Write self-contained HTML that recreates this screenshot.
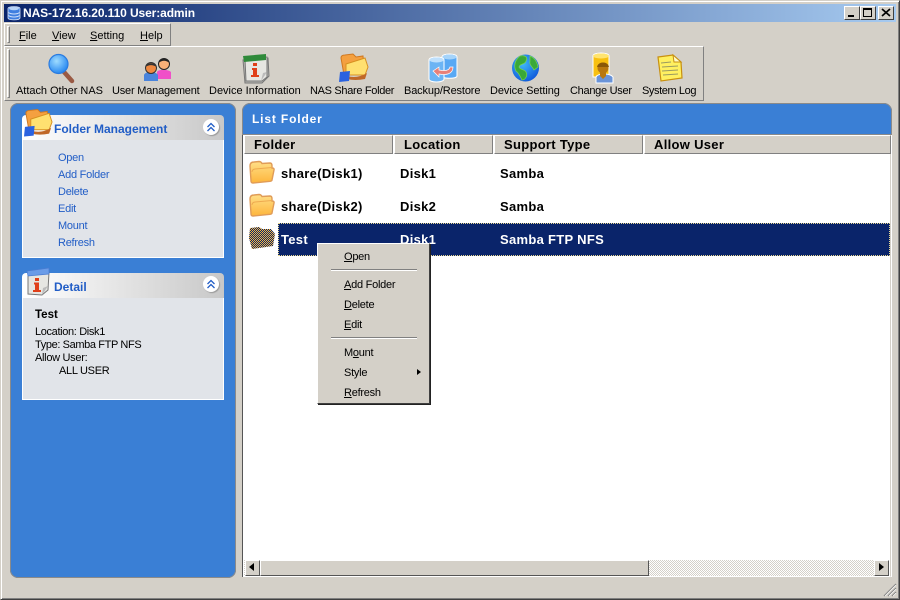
<!DOCTYPE html>
<html><head><meta charset="utf-8"><style>
html,body{margin:0;padding:0;width:900px;height:600px;overflow:hidden;background:#d4d0c8}
body{position:relative;font-family:"Liberation Sans",sans-serif;font-size:11px;color:#000}
.a{position:absolute}
.t{position:absolute;white-space:nowrap;line-height:14px}
u{text-decoration:underline}
.b{font-weight:bold;font-size:13px;letter-spacing:.3px}
.h{position:absolute;top:135px;height:17px;background:#d4d0c8;border-top:1px solid #fff;border-left:1px solid #fff;border-right:1px solid #808080;border-bottom:1px solid #808080}
.l{color:#215dc6}
.c{position:absolute;width:16px;height:16px;border-radius:50%;background:#fff;box-shadow:1px 1px 1px #999}
.s{letter-spacing:-.25px}
svg{position:absolute;overflow:visible}
</style></head><body>
<div class="a" style="left:0;top:0;width:898px;height:598px;border-top:1px solid #d4d0c8;border-left:1px solid #d4d0c8;border-right:1px solid #404040;border-bottom:1px solid #404040;box-shadow:inset 1px 1px 0 #fff,inset -1px -1px 0 #808080"></div>
<div class="a" style="left:4px;top:4px;width:892px;height:18px;background:linear-gradient(90deg,#0a246a,#a6caf0)"></div>
<svg style="left:7px;top:5px" width="16" height="16" viewBox="0 0 16 16"><path d="M1 3.5C1 1 13 1 13 3.5V13C13 15.500 1 15.500 1 13Z" fill="#3f7fe0" stroke="#d8e4f8" stroke-width=".8"/><ellipse cx="7" cy="3.500" rx="5" ry="1.800" fill="#b8d4f8"/><path d="M1.500 7.500C4 9.500 10 9.500 12.500 7.500M1.500 10.500C4 12.500 10 12.500 12.500 10.500" fill="none" stroke="#cfe0fa"/></svg>
<div class="t" style="left:23px;top:6px;color:#fff;font-weight:bold;font-size:12px;letter-spacing:-.1px">NAS-172.16.20.110 User:admin</div>
<div class="a" style="left:844px;top:6px;width:14px;height:12px;background:#d4d0c8;border-top:1px solid #fff;border-left:1px solid #fff;border-right:1px solid #404040;border-bottom:1px solid #404040"><div class="a" style="left:3px;top:8px;width:6px;height:2px;background:#000"></div></div>
<div class="a" style="left:860px;top:6px;width:14px;height:12px;background:#d4d0c8;border-top:1px solid #fff;border-left:1px solid #fff;border-right:1px solid #404040;border-bottom:1px solid #404040"><div class="a" style="left:2px;top:1px;width:7px;height:6px;border:1px solid #000;border-top-width:2px"></div></div>
<div class="a" style="left:878px;top:6px;width:14px;height:12px;background:#d4d0c8;border-top:1px solid #fff;border-left:1px solid #fff;border-right:1px solid #404040;border-bottom:1px solid #404040"><svg style="left:3px;top:2px" width="8" height="7" viewBox="0 0 8 7"><path d="M0 0L8 7M8 0L0 7" stroke="#000" stroke-width="1.700"/></svg></div>

<div class="a" style="left:4px;top:23px;width:165px;height:21px;border-top:1px solid #fff;border-left:1px solid #fff;border-right:1px solid #808080;border-bottom:1px solid #808080"></div>
<div class="a" style="left:7px;top:26px;width:1px;height:15px;border:1px solid;border-color:#fff #808080 #808080 #fff"></div>
<div class="t" style="left:19px;top:29px"><u>F</u>ile</div>
<div class="t" style="left:52px;top:29px"><u>V</u>iew</div>
<div class="t" style="left:90px;top:29px"><u>S</u>etting</div>
<div class="t" style="left:140px;top:29px"><u>H</u>elp</div>

<div class="a" style="left:4px;top:46px;width:698px;height:53px;border-top:1px solid #fff;border-left:1px solid #fff;border-right:1px solid #808080;border-bottom:1px solid #808080"></div>
<div class="a" style="left:7px;top:49px;width:1px;height:47px;border:1px solid;border-color:#fff #808080 #808080 #fff"></div>

<svg style="left:46px;top:53px" width="30" height="30" viewBox="0 0 30 30"><defs><radialGradient id="g1" cx=".4" cy=".35" r=".7"><stop offset="0" stop-color="#9fdcff"/><stop offset="1" stop-color="#1e82f0"/></radialGradient></defs><path d="M18 19L26 28" stroke="#9a5a44" stroke-width="4.500" stroke-linecap="round"/><circle cx="12.500" cy="11" r="9.500" fill="url(#g1)" stroke="#2a7be0" stroke-width="1.200"/></svg>
<svg style="left:142px;top:55px" width="30" height="27" viewBox="0 0 30 27"><path d="M15 24V17C16 14 26 14 29 17V24Z" fill="#f050c8"/><circle cx="22" cy="9" r="5.500" fill="#f8b078" stroke="#222" stroke-width="1"/><path d="M16.500 8C17 2 27 2 27.500 8C24 5 20 5 16.500 8Z" fill="#222"/><path d="M2 26V20C3 16 14 16 16 20V26Z" fill="#4a84dc"/><circle cx="9" cy="13" r="5.500" fill="#f08840" stroke="#333" stroke-width="1"/><path d="M3.500 12C4 7 14 7 14.500 12C11 9.500 7 9.500 3.500 12Z" fill="#333"/></svg>
<svg style="left:242px;top:54px" width="28" height="30" viewBox="0 0 28 30"><path d="M1 6L3 29L20 29L27 22L26 4Z" fill="#b8b8b4" stroke="#777"/><path d="M3 5L25 3V23L20 27L4 27Z" fill="#e6e6e2" stroke="#777"/><path d="M1 2L24 0V6L2 8Z" fill="#2f8a3a"/><path d="M19 27L25 18L21 19Z" fill="#bbb"/><rect x="11" y="9" width="4" height="3" fill="#e0401a"/><path d="M10 14H15V21H17V23H9V21H11V16H10Z" fill="#e0401a"/></svg>
<svg style="left:339px;top:53px" width="30" height="30" viewBox="0 0 30 30"><path d="M2 5Q2 2 6 2L14 1L17 4L24 3L25 15L5 22Z" fill="#f4a040" stroke="#d07820"/><path d="M7 11L26 5L29 14L26 22L7 22Z" fill="#ffe070" stroke="#d89020"/><path d="M8 23Q18 26 28 20L26 26Q16 28 8 26Z" fill="#c06828"/><path d="M1 19L11 18L10 28L0 29Z" fill="#2a62e0"/></svg>
<svg style="left:428px;top:53px" width="30" height="30" viewBox="0 0 30 30"><path d="M14 4C14 0 29 0 29 4V23C29 26 14 26 14 23Z" fill="#58a8f4" stroke="#fff"/><ellipse cx="21.500" cy="4" rx="7" ry="2.500" fill="#a6d4fa"/><path d="M1 7C1 3 16 3 16 7V26C16 30 1 30 1 26Z" fill="#6cb4f4" stroke="#fff"/><ellipse cx="8.500" cy="7" rx="7" ry="2.500" fill="#bfe0fc"/><path d="M25 14C25 22 17 22 11 21V24L5 18L11 14V17C16 18 21 18 22 14Z" fill="#e88078" stroke="#fff" stroke-width=".7"/></svg>
<svg style="left:511px;top:54px" width="29" height="28" viewBox="0 0 29 28"><defs><radialGradient id="g2" cx=".4" cy=".35" r=".75"><stop offset="0" stop-color="#40b8f8"/><stop offset="1" stop-color="#0a50d8"/></radialGradient></defs><circle cx="14.500" cy="14" r="13.500" fill="url(#g2)"/><path d="M9 2C14 1 17 3 15 7C14 11 9 9 8 13C9 16 13 15 15 18C17 22 14 26 11 26C9 22 8 19 5 17C3 13 3 7 9 2ZM19 2C24 4 26 8 27 13L23 16C21 12 18 11 19 7Z" fill="#3aa838" stroke="#7ad848" stroke-width=".7"/></svg>
<svg style="left:591px;top:52px" width="24" height="32" viewBox="0 0 24 32"><path d="M2 4C2 0 18 0 18 4V25H2Z" fill="#f8c010" stroke="#fff"/><ellipse cx="10" cy="4" rx="8" ry="2.500" fill="#ffe470"/><path d="M5 31V25C7 21 19 21 22 25V31Z" fill="#6a94d8" stroke="#fff"/><circle cx="12" cy="16" r="5.500" fill="#b87810"/><path d="M6 15C7 9 17 9 18 15Z" fill="#8a5808"/><path d="M9 20H15V24L12 27L9 24Z" fill="#b87810"/></svg>
<svg style="left:656px;top:54px" width="27" height="28" viewBox="0 0 27 28"><path d="M2 3L17 1L25 8L26 24L5 27Z" fill="#fff060" stroke="#c89010" stroke-width="1.200"/><path d="M17 1L18 8L25 8Z" fill="#fffbc8" stroke="#c89010"/><path d="M5 9L15 8M6 13L22 12M6 17L22 16M7 21L22 20" stroke="#9a9a60"/></svg>

<div class="t" style="left:16px;top:84px;letter-spacing:-.03px">Attach Other NAS</div>
<div class="t" style="left:112px;top:84px;letter-spacing:-.2px">User Management</div>
<div class="t" style="left:209px;top:84px">Device Information</div>
<div class="t" style="left:310px;top:84px;letter-spacing:-.32px">NAS Share Folder</div>
<div class="t" style="left:404px;top:84px;letter-spacing:-.14px">Backup/Restore</div>
<div class="t" style="left:490px;top:84px;letter-spacing:-.08px">Device Setting</div>
<div class="t" style="left:570px;top:84px;letter-spacing:-.28px">Change User</div>
<div class="t" style="left:642px;top:84px;letter-spacing:-.4px">System Log</div>

<!-- left panel -->
<div class="a" style="left:10px;top:103px;width:226px;height:475px;background:#3a7fd5;border-radius:8px;box-shadow:0 0 0 1px #8a8a8a inset"></div>
<div class="a" style="left:22px;top:115px;width:202px;height:25px;background:linear-gradient(90deg,#fff,#c8c8c8);border-radius:4px 4px 0 0"></div>
<div class="a" style="left:22px;top:140px;width:200px;height:117px;background:#e1e4e9;border:solid #fff;border-width:0 1px 1px 1px"></div>
<svg style="left:24px;top:108px" width="29" height="30" viewBox="0 0 30 30"><path d="M2 5Q2 2 6 2L14 1L17 4L24 3L25 15L5 22Z" fill="#f4a040" stroke="#d07820"/><path d="M7 11L26 5L29 14L26 22L7 22Z" fill="#ffe070" stroke="#d89020"/><path d="M8 23Q18 26 28 20L26 26Q16 28 8 26Z" fill="#c06828"/><path d="M1 19L11 18L10 28L0 29Z" fill="#2a62e0"/></svg>
<div class="t l" style="left:54px;top:122px;font-weight:bold;font-size:12px">Folder Management</div>
<div class="c" style="left:203px;top:119px"></div>
<svg style="left:203px;top:119px" width="16" height="16" viewBox="0 0 16 16"><path d="M4.500 8L8 4.500L11.500 8M4.500 12L8 8.500L11.500 12" fill="none" stroke="#215dc6" stroke-width="1.300"/></svg>
<div class="t l s" style="left:58px;top:151px">Open</div>
<div class="t l s" style="left:58px;top:168px">Add Folder</div>
<div class="t l s" style="left:58px;top:185px">Delete</div>
<div class="t l s" style="left:58px;top:202px">Edit</div>
<div class="t l s" style="left:58px;top:219px">Mount</div>
<div class="t l s" style="left:58px;top:236px">Refresh</div>

<div class="a" style="left:22px;top:273px;width:202px;height:25px;background:linear-gradient(90deg,#fff,#c8c8c8);border-radius:4px 4px 0 0"></div>
<div class="a" style="left:22px;top:298px;width:200px;height:101px;background:#e1e4e9;border:solid #fff;border-width:0 1px 1px 1px"></div>
<svg style="left:26px;top:268px" width="24" height="28" viewBox="0 0 24 28"><path d="M2 6L23 4L22 22L16 27L2 26Z" fill="#e6e6e2" stroke="#777"/><path d="M1 3L23 0L23 6L2 8Z" fill="#6a9ce8" stroke="#4a7cd0" stroke-width=".7"/><path d="M16 27L22 18L17 20Z" fill="#bbb"/><rect x="9" y="10" width="4" height="3" fill="#e0401a"/><path d="M8 14.500H13V22H15V24H7V22H9V16.500H8Z" fill="#e0401a"/></svg>
<div class="t l" style="left:54px;top:280px;font-weight:bold;font-size:12px">Detail</div>
<div class="c" style="left:203px;top:276px"></div>
<svg style="left:203px;top:276px" width="16" height="16" viewBox="0 0 16 16"><path d="M4.500 8L8 4.500L11.500 8M4.500 12L8 8.500L11.500 12" fill="none" stroke="#215dc6" stroke-width="1.300"/></svg>
<div class="t" style="left:35px;top:308px;font-weight:bold;font-size:11.500px">Test</div>
<div class="t" style="left:35px;top:325px;letter-spacing:-.35px">Location: Disk1</div>
<div class="t" style="left:35px;top:338px;letter-spacing:-.38px">Type: Samba FTP NFS</div>
<div class="t" style="left:35px;top:351px;letter-spacing:-.3px">Allow User:</div>
<div class="t" style="left:59px;top:364px;letter-spacing:-.3px">ALL USER</div>

<!-- right panel -->
<div class="a" style="left:242px;top:103px;width:650px;height:32px;background:#3a7fd5;border-radius:8px 8px 0 0;box-shadow:0 0 0 1px #8a8a8a inset"></div>
<div class="t" style="left:252px;top:112px;color:#fff;font-weight:bold;font-size:12px;letter-spacing:.85px">List Folder</div>
<div class="a" style="left:243px;top:135px;width:648px;height:442px;background:#fff;border-right:1px solid #d4d0c8;border-bottom:1px solid #fff;box-sizing:border-box;box-shadow:-1px 0 0 #555"></div>
<div class="a" style="left:891px;top:135px;width:1px;height:442px;background:#fff"></div>
<div class="h" style="left:244px;width:147px"></div>
<div class="h" style="left:394px;width:97px"></div>
<div class="h" style="left:494px;width:147px"></div>
<div class="h" style="left:644px;width:245px"></div>
<div class="t b" style="left:254px;top:138px">Folder</div>
<div class="t b" style="left:404px;top:138px">Location</div>
<div class="t b" style="left:504px;top:138px">Support Type</div>
<div class="t b" style="left:654px;top:138px">Allow User</div>

<svg style="left:249px;top:160px" width="26" height="24" viewBox="0 0 26 24"><defs><linearGradient id="f" x1="0" y1="0" x2="0" y2="1"><stop offset="0" stop-color="#ffdf88"/><stop offset="1" stop-color="#fdb53c"/></linearGradient></defs><path d="M1 6Q1 2 5 2L10 1.500Q12 1.500 13 3.500L21 3Q23 3 23 6L23 8Q25.500 8 25 10L23 20Q23 21 21 21.300L4 23Q2 23 2 21Z" fill="url(#f)" stroke="#e09c58" stroke-width="1.400"/><path d="M3 12Q3 9.500 6 9L23 7.500" fill="none" stroke="#eeaa50"/></svg>
<svg style="left:249px;top:193px" width="26" height="24" viewBox="0 0 26 24"><path d="M1 6Q1 2 5 2L10 1.500Q12 1.500 13 3.500L21 3Q23 3 23 6L23 8Q25.500 8 25 10L23 20Q23 21 21 21.300L4 23Q2 23 2 21Z" fill="url(#f)" stroke="#e09c58" stroke-width="1.400"/><path d="M3 12Q3 9.500 6 9L23 7.500" fill="none" stroke="#eeaa50"/></svg>
<svg style="left:248px;top:226px" width="28" height="24" viewBox="0 0 28 24"><defs><pattern id="ch" width="2" height="2" patternUnits="userSpaceOnUse"><rect width="2" height="2" fill="#0a246a"/><rect width="1" height="1" fill="#f8b840"/><rect x="1" y="1" width="1" height="1" fill="#f8b840"/></pattern></defs><path d="M2 2L11 1L14 3L23 3L27 8L25 20L4 23L1 12Z" fill="url(#ch)"/></svg>
<div class="a" style="left:278px;top:223px;width:612px;height:33px;background:#0a246a;box-sizing:border-box;border:1px dotted #e8d890"></div>

<div class="t b" style="left:281px;top:167px">share(Disk1)</div>
<div class="t b" style="left:400px;top:167px">Disk1</div>
<div class="t b" style="left:500px;top:167px">Samba</div>
<div class="t b" style="left:281px;top:200px">share(Disk2)</div>
<div class="t b" style="left:400px;top:200px">Disk2</div>
<div class="t b" style="left:500px;top:200px">Samba</div>
<div class="t b" style="left:281px;top:233px;color:#fff">Test</div>
<div class="t b" style="left:400px;top:233px;color:#fff">Disk1</div>
<div class="t b" style="left:500px;top:233px;color:#fff">Samba FTP NFS</div>

<!-- scrollbar -->
<div class="a" style="left:244px;top:560px;width:645px;height:16px;background:repeating-conic-gradient(#fff 0 25%,#d4d0c8 0 50%) 0 0/2px 2px"></div>
<div class="a" style="left:245px;top:560px;width:13px;height:14px;background:#d4d0c8;border:1px solid;border-color:#fff #555 #555 #fff"></div>
<div class="a" style="left:249px;top:563px;border:4px solid transparent;border-right:5px solid #000;border-left:0"></div>
<div class="a" style="left:260px;top:560px;width:387px;height:14px;background:#d4d0c8;border:1px solid;border-color:#fff #555 #555 #fff"></div>
<div class="a" style="left:874px;top:560px;width:13px;height:14px;background:#d4d0c8;border:1px solid;border-color:#fff #555 #555 #fff"></div>
<div class="a" style="left:879px;top:563px;border:4px solid transparent;border-left:5px solid #000;border-right:0"></div>

<!-- grip -->
<svg style="left:883px;top:583px" width="14" height="14" viewBox="0 0 14 14"><path d="M1 13L13 1M5 13L13 5M9 13L13 9" stroke="#808080" stroke-width="1.200"/><path d="M2 13L13 2M6 13L13 6M10 13L13 10" stroke="#fff" stroke-width=".7"/></svg>

<!-- context menu -->
<div class="a" style="left:317px;top:243px;width:111px;height:159px;background:#d4d0c8;border-top:1px solid #fff;border-left:1px solid #fff;border-right:1px solid #404040;border-bottom:1px solid #404040;box-shadow:1px 1px 0 #222"></div>
<div class="t s" style="left:344px;top:250px"><u>O</u>pen</div>
<div class="a" style="left:331px;top:269px;width:86px;height:1px;background:#808080;border-bottom:1px solid #fff"></div>
<div class="t s" style="left:344px;top:278px"><u>A</u>dd Folder</div>
<div class="t s" style="left:344px;top:298px"><u>D</u>elete</div>
<div class="t s" style="left:344px;top:318px"><u>E</u>dit</div>
<div class="a" style="left:331px;top:337px;width:86px;height:1px;background:#808080;border-bottom:1px solid #fff"></div>
<div class="t s" style="left:344px;top:346px">M<u>o</u>unt</div>
<div class="t s" style="left:344px;top:366px">Style</div>
<div class="a" style="left:417px;top:369px;border:3.500px solid transparent;border-left:4px solid #000;border-right:0"></div>
<div class="t s" style="left:344px;top:386px"><u>R</u>efresh</div>
</body></html>
